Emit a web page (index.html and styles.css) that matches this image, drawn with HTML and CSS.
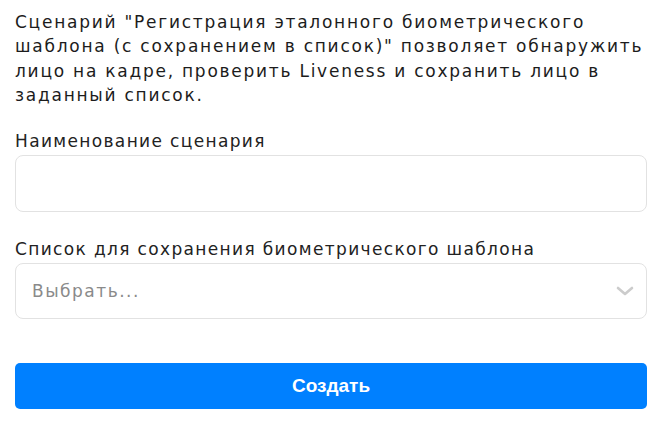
FILE: index.html
```html
<!DOCTYPE html>
<html lang="ru">
<head>
<meta charset="utf-8">
<link rel="stylesheet" href="styles.css">
</head>
<body>
<form class="form">
  <p class="intro">Сценарий "Регистрация эталонного биометрического шаблона (с сохранением в список)" позволяет обнаружить лицо на кадре, проверить Liveness и сохранить лицо в заданный список.</p>
  <div class="field">
    <label class="label">Наименование сценария</label>
    <div class="input"></div>
  </div>
  <div class="field field-second">
    <label class="label">Список для сохранения биометрического шаблона</label>
    <div class="input select">
      <span class="placeholder">Выбрать...</span>
      <svg class="chevron" width="18" height="10" viewBox="0 0 18 10"><path d="M2 2 L9 8 L16 2" fill="none" stroke="#cccccc" stroke-width="2.6" stroke-linecap="round" stroke-linejoin="round"/></svg>
    </div>
  </div>
  <button type="button" class="btn">Создать</button>
</form>
</body>
</html>
```
FILE: styles.css
```css
html, body {
  margin: 0;
  background: #ffffff;
}
.form {
  display: flex;
  flex-direction: column;
  padding: 10px 15px 0 15px;
  font-family: "DejaVu Sans", sans-serif;
}
.intro {
  margin: 0;
  font-size: 17px;
  line-height: 24.3px;
  letter-spacing: 1.75px;
  color: #1c1c1c;
}
.field {
  display: flex;
  flex-direction: column;
  gap: 2px;
  margin-top: 22px;
}
.field-second {
  margin-top: 25px;
}
.label {
  font-size: 17px;
  line-height: 24px;
  letter-spacing: 1.35px;
  color: #222;
}
.input {
  border: 1px solid #e2e2e2;
  border-radius: 8px;
  box-sizing: border-box;
  height: 57px;
}
.select {
  height: 56px;
  display: flex;
  align-items: center;
  justify-content: space-between;
  padding: 0 12px 0 16px;
}
.placeholder {
  font-size: 17px;
  letter-spacing: 1.5px;
  color: #8a8a8a;
}
.btn {
  margin-top: 44px;
  height: 46px;
  border: none;
  border-radius: 5px;
  background: #0080ff;
  color: #fff;
  font-family: "Liberation Sans", Arial, sans-serif;
  font-weight: bold;
  font-size: 19px;
}
```
